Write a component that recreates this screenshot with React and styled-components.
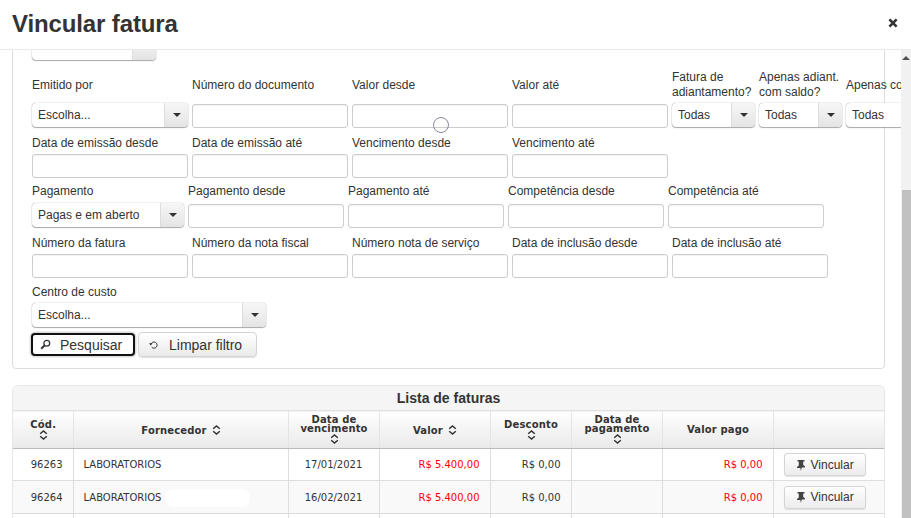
import React from 'react'
import styled, { createGlobalStyle } from 'styled-components'

const GlobalStyle = createGlobalStyle`
  html, body {
    margin: 0;
    height: 100%;
    overflow: hidden;
    background: #fff;
    font-family: "Liberation Sans", Arial, sans-serif;
    color: #333;
  }
`
const Modal = styled.div`
  width: 911px;
  height: 518px;
  display: flex;
  flex-direction: column;
  background: #fff;
  overflow: hidden;
`
const Header = styled.div`
  height: 49px;
  flex: none;
  display: flex;
  align-items: center;
  justify-content: space-between;
  padding: 0 13px 0 12px;
  border-bottom: 1px solid #e9e9e9;
`
const Title = styled.h3`
  margin: 0 0 2px;
  font-size: 24px;
  font-weight: bold;
  letter-spacing: -0.12px;
  line-height: 47px;
`
const CloseIcon = styled.svg`
  width: 10px;
  height: 10px;
  margin-bottom: 4px;
`
const Body = styled.div`
  flex: 1;
  display: flex;
  min-height: 0;
`
const Content = styled.div`
  width: 901px;
  padding: 0 0 0 12px;
  box-sizing: border-box;
  overflow: hidden;
  position: relative;
`
const Scrollbar = styled.div`
  width: 10px;
  background: #f1f1f1;
  position: relative;
  padding-top: ${p => p.$offset}px;
  box-sizing: border-box;
`
const ScrollArrow = styled.div`
  position: absolute;
  top: 6px;
  left: 1px;
  width: 0;
  height: 0;
  border-left: 4px solid transparent;
  border-right: 4px solid transparent;
  border-bottom: 4px solid #505050;
`
const ScrollThumb = styled.div`
  height: 100%;
  background: #c1c1c1;
  margin-left: 1px;
`
const Panel = styled.div`
  width: 873px;
  box-sizing: border-box;
  margin-top: -30px;
  padding: 16px 0 10px 19px;
  border: 1px solid #ddd;
  border-radius: 4px;
  height: 349px;
`
const Row = styled.div`
  display: flex;
  gap: 4px;
  margin-top: ${p => p.$top || 0}px;
`
const Field = styled.div`
  width: ${p => p.$width}px;
  flex: none;
`
const Label = styled.div`
  height: ${p => p.$height}px;
  margin-bottom: ${p => p.$gap || 0}px;
  display: flex;
  align-items: center;
  font-size: 12px;
  line-height: 15px;
  white-space: nowrap;
  color: #333;
`
const Input = styled.input`
  display: block;
  width: 100%;
  height: 24px;
  box-sizing: border-box;
  border: 1px solid #ccc;
  border-radius: 3px;
  background: #fff;
  box-shadow: inset 0 1px 1px rgba(0, 0, 0, 0.05);
  padding: 0 5px;
`
const SelectBox = styled.div`
  display: flex;
  height: 24px;
  margin-top: ${p => (p.$flush ? 0 : -1)}px;
  margin-bottom: ${p => (p.$flush ? 0 : 1)}px;
  box-sizing: border-box;
  width: ${p => (p.$width ? p.$width + 'px' : '100%')};
  border-radius: 4px;
  background: #fff;
  box-shadow: 0 0 1px rgba(0, 0, 0, 0.55), 0 1px 1px rgba(0, 0, 0, 0.3);
`
const SelectText = styled.div`
  flex: 1;
  padding: 1px 0 0 6px;
  font-size: 12px;
  line-height: 23px;
  white-space: nowrap;
  overflow: hidden;
`
const SelectArrow = styled.div`
  width: 23px;
  flex: none;
  display: flex;
  align-items: center;
  justify-content: center;
  border-left: 1px solid #ddd;
  border-radius: 0 4px 4px 0;
  background: linear-gradient(#f7f7f7, #e4e4e4);
  &::after {
    content: '';
    ${p => (p.$empty ? 'display: none;' : '')}
    border-left: 4px solid transparent;
    border-right: 4px solid transparent;
    border-top: 4px solid #333;
  }
`
const Buttons = styled.div`
  display: flex;
  align-items: center;
  gap: 3px;
  margin-top: 5px;
  margin-left: -1px;
`
const Button = styled.button`
  display: inline-flex;
  align-items: center;
  height: ${p => (p.$focus ? 23 : 25)}px;
  padding: 0;
  width: ${p => p.$width}px;
  box-sizing: border-box;
  font-family: inherit;
  font-size: 14px;
  color: #333;
  border-radius: 4px;
  border: 1px solid #d4d4d4;
  background: linear-gradient(#fff, #eaeaea);
  ${p => p.$focus ? `
    border: 2px solid #111;
    box-shadow: 0 0 0 1.5px #ddd;
    background: #fff;
  ` : `
    box-shadow: 0 1px 1px rgba(0, 0, 0, 0.12);
  `}
`
const ButtonIcon = styled.svg`
  width: ${p => p.$size || 11}px;
  height: ${p => p.$size || 11}px;
  flex: none;
  margin-left: ${p => p.$left}px;
  margin-right: ${p => p.$right}px;
`
const TableWrap = styled.div`
  width: 873px;
  box-sizing: border-box;
  margin-top: 16px;
  border: 1px solid #e6e6e6;
  border-bottom: 0;
  border-radius: 6px 6px 0 0;
  position: relative;
`
const Caption = styled.div`
  height: 24px;
  background: #f5f5f5;
  text-align: center;
  font-size: 14px;
  font-weight: bold;
  line-height: 25px;
  border-radius: 6px 6px 0 0;
`
const Table = styled.table`
  width: 871px;
  table-layout: fixed;
  border-collapse: collapse;
  font-family: "DejaVu Sans", Verdana, sans-serif;
  font-size: 10px;
`
const Th = styled.th`
  height: 38px;
  padding: ${p => p.$pad || 0}px 0 2px 1px;
  box-sizing: border-box;
  border-top: 1px solid #e0e0e0;
  border-bottom: 1px solid #bbb;
  border-left: 1px solid #e4e4e4;
  background: linear-gradient(#fff, #e9e9e9);
  text-align: center;
  vertical-align: middle;
  font-weight: bold;
  letter-spacing: 0.15px;
  line-height: 9px;
  color: #333;
  &:first-child { border-left: 0; }
`
const Td = styled.td`
  height: ${p => p.$height || 32}px;
  padding: ${p => (p.$center ? '0' : '0 10px 0 10px')};
  box-sizing: border-box;
  border-bottom: 1px solid #ddd;
  border-left: 1px solid #ddd;
  text-align: ${p => (p.$center ? 'center' : p.$align || 'left')};
  color: ${p => (p.$red ? '#f00' : '#333')};
  white-space: nowrap;
  &:first-child { border-left: 0; padding: 0 10px 0 0; }
`
const Tr = styled.tr`
  background: ${p => (p.$odd ? '#f9f9f9' : '#fff')};
`
const SortIcon = styled.svg`
  width: 9px;
  height: 10px;
  vertical-align: middle;
  display: ${p => (p.$block ? 'block' : 'inline-block')};
  margin: ${p => (p.$block ? '1px auto -2px' : '-2px 0 0 5px')};
`
const PinButton = styled.button`
  display: inline-flex;
  align-items: center;
  height: 23px;
  width: 82px;
  padding: 0 0 0 10px;
  box-sizing: border-box;
  font-family: "Liberation Sans", Arial, sans-serif;
  font-size: 12px;
  color: #333;
  border: 1px solid #d4d4d4;
  border-radius: 3px;
  background: linear-gradient(#fff, #ececec);
  box-shadow: 0 1px 1px rgba(0, 0, 0, 0.1);
`
const Redaction = styled.div`
  position: absolute;
  left: 152px;
  top: 103px;
  width: 85px;
  height: 18px;
  background: #fff;
  border-radius: 8px;
`
const CursorRing = styled.div`
  position: absolute;
  left: 433px;
  top: 67px;
  width: 16px;
  height: 16px;
  box-sizing: border-box;
  border: 1px solid #8a8a9c;
  border-radius: 50%;
`

const Close = () => (
  <CloseIcon viewBox="0 0 10 10">
    <path d="M1.4 1.4l7.2 7.2M8.6 1.4L1.4 8.6" stroke="#333" strokeWidth="2.6" />
  </CloseIcon>
)
const Sort = ({ block }) => (
  <SortIcon $block={block} viewBox="0 0 9 10">
    <path d="M1.2 3.8L4.5 1l3.3 2.8M1.2 6.2L4.5 9l3.3-2.8" fill="none" stroke="#333" strokeWidth="1.5" />
  </SortIcon>
)
const Pin = () => (
  <ButtonIcon $size={12} $left={0} $right={4} viewBox="0 0 12 12">
    <path d="M2.5 1h7v1.4H8.2v3.4l1.8 1.6v1H6.7L6 12l-.7-3H2v-1l1.8-1.6V2.4H2.5z" fill="#444" />
  </ButtonIcon>
)

const Select = ({ children, width, flush }) => (
  <SelectBox $width={width} $flush={flush}>
    <SelectText>{children}</SelectText>
    <SelectArrow />
  </SelectBox>
)

const rows = [
  { code: '96263', date: '17/01/2021' },
  { code: '96264', date: '16/02/2021', odd: true },
]

const App = () => (
  <Modal>
    <GlobalStyle />
    <Header>
      <Title>Vincular fatura</Title>
      <Close />
    </Header>
    <Body>
      <Content>
        <Panel>
          <SelectBox $width={124}>
            <SelectText />
            <SelectArrow $empty />
          </SelectBox>
          <Row $top={10}>
            <Field $width={156}><Label $height={30} $gap={4}>Emitido por</Label><Select>Escolha...</Select></Field>
            <Field $width={156}><Label $height={30} $gap={4}>Número do documento</Label><Input /></Field>
            <Field $width={156}><Label $height={30} $gap={4}>Valor desde</Label><Input /></Field>
            <Field $width={156}><Label $height={30} $gap={4}>Valor até</Label><Input /></Field>
            <Field $width={83}><Label $height={30} $gap={4}>Fatura de<br />adiantamento?</Label><Select>Todas</Select></Field>
            <Field $width={83}><Label $height={30} $gap={4}>Apenas adiant.<br />com saldo?</Label><Select>Todas</Select></Field>
            <Field $width={83}><Label $height={30} $gap={4}>Apenas com</Label><Select>Todas</Select></Field>
          </Row>
          <Row $top={4}>
            <Field $width={156}><Label $height={22}>Data de emissão desde</Label><Input /></Field>
            <Field $width={156}><Label $height={22}>Data de emissão até</Label><Input /></Field>
            <Field $width={156}><Label $height={22}>Vencimento desde</Label><Input /></Field>
            <Field $width={156}><Label $height={22}>Vencimento até</Label><Input /></Field>
          </Row>
          <Row>
            <Field $width={152}><Label $height={26}>Pagamento</Label><Select>Pagas e em aberto</Select></Field>
            <Field $width={156}><Label $height={26}>Pagamento desde</Label><Input /></Field>
            <Field $width={156}><Label $height={26}>Pagamento até</Label><Input /></Field>
            <Field $width={156}><Label $height={26}>Competência desde</Label><Input /></Field>
            <Field $width={156}><Label $height={26}>Competência até</Label><Input /></Field>
          </Row>
          <Row $top={4}>
            <Field $width={156}><Label $height={22}>Número da fatura</Label><Input /></Field>
            <Field $width={156}><Label $height={22}>Número da nota fiscal</Label><Input /></Field>
            <Field $width={156}><Label $height={22}>Número nota de serviço</Label><Input /></Field>
            <Field $width={156}><Label $height={22}>Data de inclusão desde</Label><Input /></Field>
            <Field $width={156}><Label $height={22}>Data de inclusão até</Label><Input /></Field>
          </Row>
          <Row $top={3}>
            <Field $width={234}><Label $height={22}>Centro de custo</Label><Select flush>Escolha...</Select></Field>
          </Row>
          <Buttons>
            <Button $focus $width={104}>
              <ButtonIcon $left={7} $right={9} viewBox="0 0 11 11">
                <circle cx="6.8" cy="4.2" r="2.9" fill="none" stroke="#333" strokeWidth="1.3" />
                <path d="M4.6 6.4L1.2 9.8" stroke="#333" strokeWidth="2" />
              </ButtonIcon>
              Pesquisar
            </Button>
            <Button $width={119}>
              <ButtonIcon $size={10} $left={10} $right={10} viewBox="0 0 10 10">
                <path d="M2 4.2a3.1 3.1 0 1 1 .7 3" fill="none" stroke="#333" strokeWidth="1" />
                <path d="M0 3.2h3.6L1.8 5.4z" fill="#333" />
              </ButtonIcon>
              Limpar filtro
            </Button>
          </Buttons>
        </Panel>
        <CursorRing />
        <TableWrap>
          <Caption>Lista de faturas</Caption>
          <Table>
            <colgroup>
              <col style={{ width: 60 }} />
              <col style={{ width: 215 }} />
              <col style={{ width: 91 }} />
              <col style={{ width: 111 }} />
              <col style={{ width: 81 }} />
              <col style={{ width: 91 }} />
              <col style={{ width: 111 }} />
              <col style={{ width: 111 }} />
            </colgroup>
            <thead>
              <tr>
                <Th>Cód.<Sort block /></Th>
                <Th $pad={3}>Fornecedor<Sort /></Th>
                <Th>Data de<br />vencimento<Sort block /></Th>
                <Th $pad={3}>Valor<Sort /></Th>
                <Th>Desconto<Sort block /></Th>
                <Th>Data de<br />pagamento<Sort block /></Th>
                <Th $pad={1}>Valor pago</Th>
                <Th />
              </tr>
            </thead>
            <tbody>
              {rows.map(row => (
                <Tr key={row.code} $odd={row.odd}>
                  <Td $align="right" $height={row.odd ? 33 : 32}>{row.code}</Td>
                  <Td>LABORATORIOS</Td>
                  <Td $center>{row.date}</Td>
                  <Td $align="right" $red>R$ 5.400,00</Td>
                  <Td $align="right">R$ 0,00</Td>
                  <Td />
                  <Td $align="right" $red>R$ 0,00</Td>
                  <Td><PinButton><Pin />Vincular</PinButton></Td>
                </Tr>
              ))}
              <Tr>
                <Td $height={32} />
                <Td /><Td /><Td /><Td /><Td /><Td /><Td />
              </Tr>
            </tbody>
          </Table>
          <Redaction />
        </TableWrap>
      </Content>
      <Scrollbar $offset={140}>
        <ScrollArrow />
        <ScrollThumb />
      </Scrollbar>
    </Body>
  </Modal>
)

export default App
